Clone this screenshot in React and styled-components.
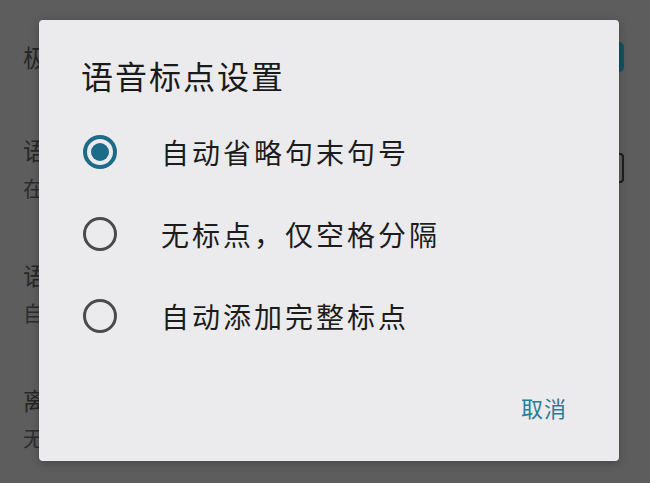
import React, { useState } from "react";
import styled, { createGlobalStyle } from "styled-components";

const GlobalStyle = createGlobalStyle`
  html, body {
    margin: 0;
    padding: 0;
    background: #5d5d5d;
  }
  body {
    font-family: "Noto Sans CJK SC", "Noto Sans", sans-serif;
  }
`;

const Page = styled.div`
  position: relative;
  width: 650px;
  height: 483px;
  overflow: hidden;
  background: #5d5d5d;
`;

const SettingsList = styled.div`
  display: flex;
  flex-direction: column;
  padding: 9px 26px 0 23px;
`;

const SettingRow = styled.div`
  display: flex;
  align-items: center;
  justify-content: space-between;
  padding: 30px 0;
`;

const SettingText = styled.div`
  display: flex;
  flex-direction: column;
`;

const SettingTitle = styled.div`
  font-size: 24px;
  line-height: ${(p) => (p.single ? "36px" : "30px")};
  color: #262626;
`;

const SettingSub = styled.div`
  margin-top: 9px;
  font-size: 21px;
  line-height: 26px;
  color: #2c2c2c;
`;

const SwitchThumb = styled.div`
  width: 26px;
  height: 30px;
  border-radius: 5px;
  background: #16505e;
`;

const CheckBox = styled.div`
  width: 26px;
  height: 26px;
  border: 2px solid #1e1e1e;
  border-radius: 4px;
`;

const Dialog = styled.div`
  position: absolute;
  left: 39px;
  top: 20px;
  width: 580px;
  height: 441px;
  box-sizing: border-box;
  border-radius: 4px;
  background: #ebebed;
  box-shadow: 0 2px 8px rgba(0, 0, 0, 0.25);
  display: flex;
  flex-direction: column;
  padding: 35px 0 0 0;
`;

const DialogTitle = styled.div`
  padding-left: 42px;
  font-size: 32px;
  line-height: 40px;
  letter-spacing: 2px;
  color: #1a1a1a;
  margin-bottom: 16px;
`;

const OptionRow = styled.label`
  display: flex;
  align-items: center;
  height: 82px;
  padding-left: 44px;
  cursor: pointer;
`;

const Radio = styled.span`
  box-sizing: border-box;
  width: 34px;
  height: 34px;
  border-radius: 50%;
  border: ${(p) => (p.checked ? "4px solid #1c6b88" : "3px solid #4a4a4c")};
  display: flex;
  align-items: center;
  justify-content: center;
  flex-shrink: 0;
  &::after {
    content: "";
    display: ${(p) => (p.checked ? "block" : "none")};
    width: 18px;
    height: 18px;
    border-radius: 50%;
    background: #1c6b88;
  }
`;

const OptionText = styled.span`
  margin-left: 44px;
  font-size: 28px;
  line-height: 36px;
  letter-spacing: 3px;
  color: #1c1c1c;
`;

const Footer = styled.div`
  display: flex;
  justify-content: flex-end;
  padding-right: 52px;
  margin-top: 35px;
`;

const TextButton = styled.button`
  border: none;
  background: none;
  padding: 0;
  font-family: inherit;
  font-size: 22px;
  line-height: 30px;
  letter-spacing: 1px;
  color: #2a7d98;
  cursor: pointer;
`;

const settings = [
  { title: "极速识别", control: "switch" },
  { title: "语音输入", sub: "在输入法中使用语音", control: "check" },
  { title: "语音标点设置", sub: "自动省略句末句号" },
  { title: "离线语音", sub: "无" },
];

const options = ["自动省略句末句号", "无标点，仅空格分隔", "自动添加完整标点"];

const App = () => {
  const [selected, setSelected] = useState(0);

  return (
    <>
      <GlobalStyle />
      <Page>
        <SettingsList>
          {settings.map((s) => (
            <SettingRow key={s.title}>
              <SettingText>
                <SettingTitle single={!s.sub}>{s.title}</SettingTitle>
                {s.sub && <SettingSub>{s.sub}</SettingSub>}
              </SettingText>
              {s.control === "switch" && <SwitchThumb />}
              {s.control === "check" && <CheckBox />}
            </SettingRow>
          ))}
        </SettingsList>

        <Dialog>
          <DialogTitle>语音标点设置</DialogTitle>
          {options.map((o, i) => (
            <OptionRow key={o} onClick={() => setSelected(i)}>
              <Radio checked={selected === i} />
              <OptionText>{o}</OptionText>
            </OptionRow>
          ))}
          <Footer>
            <TextButton>取消</TextButton>
          </Footer>
        </Dialog>
      </Page>
    </>
  );
};

export default App;
